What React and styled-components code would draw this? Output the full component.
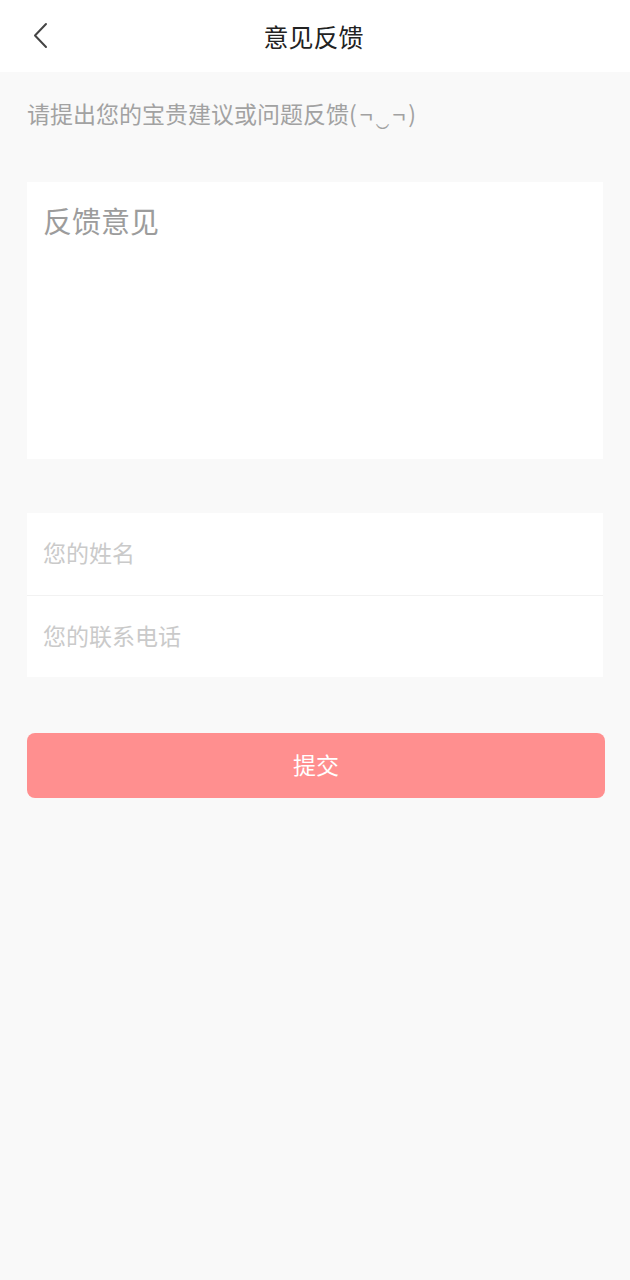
import React from "react";
import styled, { createGlobalStyle } from "styled-components";

const Global = createGlobalStyle`
  html, body { margin: 0; padding: 0; background: #f9f9f9; }
  body { font-family: "Noto Sans CJK SC", "Noto Sans", sans-serif; }
  * { box-sizing: border-box; }
`;

const Page = styled.div`
  min-height: 1280px;
  background: #f9f9f9;
  display: flex;
  flex-direction: column;
`;

const Header = styled.header`
  height: 72px;
  background: #ffffff;
  display: grid;
  grid-template-columns: 80px 1fr 80px;
  align-items: center;
`;

const BackButton = styled.button`
  border: 0;
  background: none;
  padding: 0 0 0 31px;
  height: 40px;
  display: flex;
  align-items: center;
  cursor: pointer;
`;

const Title = styled.h1`
  margin: 0;
  text-align: center;
  font-size: 25px;
  font-weight: 400;
  color: #222222;
  line-height: 1;
  padding: 0 3px 0 0;
`;

const Body = styled.main`
  padding: 26px 27px 0 27px;
  display: flex;
  flex-direction: column;
`;

const Hint = styled.p`
  margin: 0 0 2px 0;
  font-size: 23px;
  line-height: 30px;
  color: #a2a2a2;
`;

const Face = styled.span`
  letter-spacing: 3px;
`;

const FeedbackBox = styled.textarea`
  margin-top: 52px;
  width: 576px;
  height: 277px;
  border: 0;
  outline: none;
  resize: none;
  background: #ffffff;
  padding: 18px 16px;
  font-family: inherit;
  font-size: 29px;
  line-height: 40px;
  color: #333;
  &::placeholder { color: #9c9c9c; }
`;

const FieldGroup = styled.div`
  margin-top: 54px;
  width: 576px;
  background: #ffffff;
  display: flex;
  flex-direction: column;
`;

const Field = styled.input`
  height: ${(p) => p.$h}px;
  border: 0;
  outline: none;
  background: transparent;
  padding: 0 16px 4px 16px;
  font-family: inherit;
  font-size: 23px;
  color: #333;
  &::placeholder { color: #cacaca; }
`;

const Divider = styled.div`
  height: 1px;
  background: #f2f2f2;
`;

const Submit = styled.button`
  margin-top: 56px;
  width: 578px;
  height: 65px;
  border: 0;
  border-radius: 8px;
  background: #ff8f8f;
  color: #ffffff;
  font-family: inherit;
  font-size: 23px;
  padding: 0 0 3px 0;
  cursor: pointer;
`;

export default function App() {
  return (
    <Page>
      <Global />
      <Header>
        <BackButton aria-label="返回">
          <svg width="18" height="28" viewBox="0 0 18 28" fill="none">
            <path d="M15 2 L4 13.5 L15 25" stroke="#444" strokeWidth="2" strokeLinecap="round" strokeLinejoin="round" />
          </svg>
        </BackButton>
        <Title>意见反馈</Title>
        <div />
      </Header>
      <Body>
        <Hint>
          请提出您的宝贵建议或问题反馈<Face>(¬‿¬)</Face>
        </Hint>
        <FeedbackBox placeholder="反馈意见" />
        <FieldGroup>
          <Field $h={82} placeholder="您的姓名" />
          <Divider />
          <Field $h={81} placeholder="您的联系电话" />
        </FieldGroup>
        <Submit>提交</Submit>
      </Body>
    </Page>
  );
}
